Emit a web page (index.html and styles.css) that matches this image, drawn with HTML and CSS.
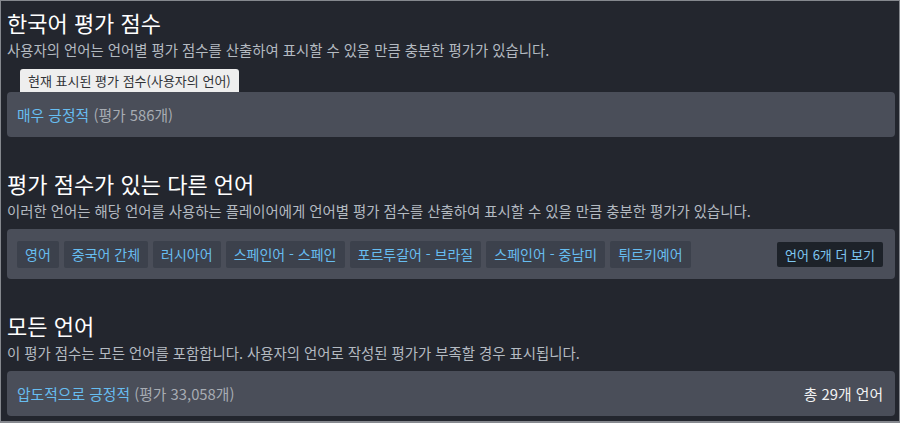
FILE: index.html
```html
<!DOCTYPE html>
<html lang="ko">
<head>
<meta charset="utf-8">
<link rel="stylesheet" href="styles.css">
</head>
<body>
<div class="page">
  <section class="sec first">
    <h2 class="title">한국어 평가 점수</h2>
    <p class="sub">사용자의 언어는 언어별 평가 점수를 산출하여 표시할 수 있을 만큼 충분한 평가가 있습니다.</p>
    <div class="tip">현재 표시된 평가 점수(사용자의 언어)</div>
    <div class="panel">
      <div class="line"><span class="score">매우 긍정적</span> <span class="count">(평가 586개)</span></div>
    </div>
  </section>
  <section class="sec">
    <h2 class="title">평가 점수가 있는 다른 언어</h2>
    <p class="sub">이러한 언어는 해당 언어를 사용하는 플레이어에게 언어별 평가 점수를 산출하여 표시할 수 있을 만큼 충분한 평가가 있습니다.</p>
    <div class="panel tags">
      <div class="taglist">
        <span class="tag">영어</span>
        <span class="tag">중국어 간체</span>
        <span class="tag">러시아어</span>
        <span class="tag">스페인어 - 스페인</span>
        <span class="tag">포르투갈어 - 브라질</span>
        <span class="tag">스페인어 - 중남미</span>
        <span class="tag">튀르키예어</span>
      </div>
      <span class="more">언어 6개 더 보기</span>
    </div>
  </section>
  <section class="sec">
    <h2 class="title">모든 언어</h2>
    <p class="sub">이 평가 점수는 모든 언어를 포함합니다. 사용자의 언어로 작성된 평가가 부족할 경우 표시됩니다.</p>
    <div class="panel split">
      <div class="line"><span class="score">압도적으로 긍정적</span> <span class="count">(평가 33,058개)</span></div>
      <span class="total">총 29개 언어</span>
    </div>
  </section>
</div>
</body>
</html>
```
FILE: styles.css
```css
html, body {
  margin: 0;
  padding: 0;
  background: #23262e;
}
body {
  font-family: "Noto Sans CJK KR", "Noto Sans", sans-serif;
}
.page {
  box-sizing: border-box;
  width: 900px;
  height: 423px;
  border: 1px solid #85888e;
  border-bottom-width: 2px;
  padding: 7px 4px 0 6px;
  background: #23262e;
  overflow: hidden;
}
.sec {
  margin-top: 32px;
}
.sec.first {
  margin-top: 0;
}
.title {
  margin: 0 0 4px;
  font-size: 22px;
  line-height: 28px;
  font-weight: 400;
  color: #ffffff;
}
.sub {
  margin: 0;
  font-size: 14.4px;
  line-height: 20px;
  color: #b4bac1;
  white-space: nowrap;
}
.tip {
  display: inline-block;
  margin: 9px 0 0 13px;
  padding: 0 8px;
  height: 23px;
  line-height: 23px;
  font-size: 13px;
  color: #303236;
  background: #eeeeee;
  border-radius: 3px 3px 0 0;
  vertical-align: top;
}
.panel {
  margin-top: 8px;
  background: #4a4e59;
  border-radius: 4px;
  height: 45px;
  box-sizing: border-box;
  padding: 0 12px 0 10px;
  display: flex;
  align-items: center;
  font-size: 14.8px;
}
.first .panel {
  margin-top: 0;
}
.score {
  color: #67bdf0;
}
.count {
  color: #a7acb3;
}
.tags {
  height: 50px;
  justify-content: space-between;
}
.taglist {
  display: flex;
  gap: 5px;
}
.tag {
  height: 27px;
  line-height: 27px;
  padding: 0 8px;
  background: #3c414c;
  border-radius: 2px;
  color: #67bdf0;
  font-size: 14px;
}
.more {
  height: 25px;
  line-height: 25px;
  padding: 0 8px;
  background: #1d2229;
  border-radius: 2px;
  color: #7fc8f2;
  font-size: 13px;
}
.split {
  justify-content: space-between;
}
.total {
  color: #f2f2f2;
}
```
